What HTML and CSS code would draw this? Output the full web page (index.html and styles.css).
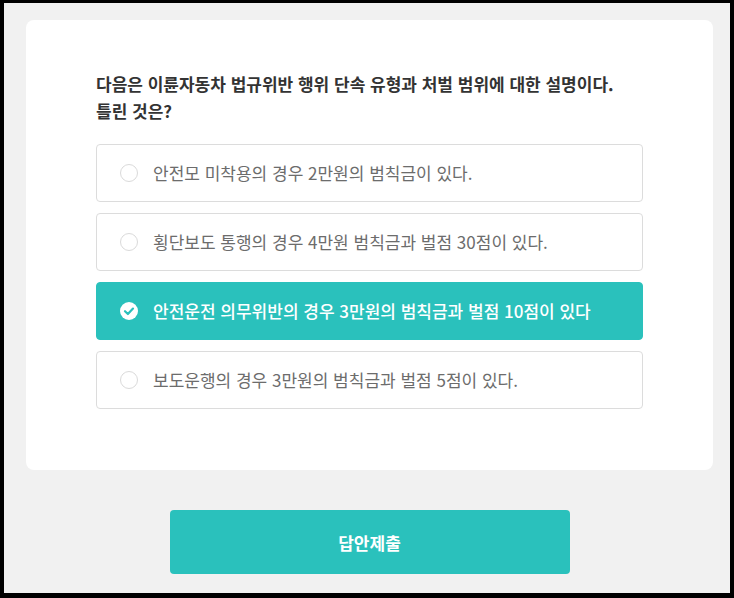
FILE: index.html
```html
<!DOCTYPE html>
<html lang="ko">
<head>
<meta charset="utf-8">
<link rel="stylesheet" href="styles.css">
</head>
<body>
<div class="frame">
  <section class="card">
    <h1 class="question">다음은 이륜자동차 법규위반 행위 단속 유형과 처벌 범위에 대한 설명이다.<br>틀린 것은?</h1>
    <ul class="options">
      <li class="option"><span class="radio"></span><span class="label">안전모 미착용의 경우 2만원의 범칙금이 있다.</span></li>
      <li class="option"><span class="radio"></span><span class="label">횡단보도 통행의 경우 4만원 범칙금과 벌점 30점이 있다.</span></li>
      <li class="option selected"><span class="radio checked"><svg viewBox="0 0 18 18" width="18" height="18"><circle cx="9" cy="9" r="9" fill="#fff"/><path d="M5 9.2 L7.9 12 L13 6.6" fill="none" stroke="#2ac1bc" stroke-width="2.2" stroke-linecap="round" stroke-linejoin="round"/></svg></span><span class="label">안전운전 의무위반의 경우 3만원의 범칙금과 벌점 10점이 있다</span></li>
      <li class="option"><span class="radio"></span><span class="label">보도운행의 경우 3만원의 범칙금과 벌점 5점이 있다.</span></li>
    </ul>
  </section>
  <div class="actions">
    <button class="submit">답안제출</button>
  </div>
</div>
</body>
</html>
```

FILE: styles.css
```css
* { box-sizing: border-box; }
html, body { margin: 0; padding: 0; }
body {
  background: #000;
  width: 734px;
  height: 598px;
  overflow: hidden;
  font-family: "Noto Sans CJK KR", "Noto Sans", sans-serif;
}
.frame {
  margin: 3px 4px 5px 4px;
  height: 590px;
  background: #f1f1f1;
  padding-top: 17px;
}
.card {
  margin: 0 17px 0 22px;
  height: 450px;
  background: #fff;
  border-radius: 8px;
  padding: 50px 70px 0 70px;
}
.question {
  margin: 0;
  font-size: 17px;
  font-weight: 700;
  line-height: 27px;
  color: #333;
  letter-spacing: 0;
}
.options {
  list-style: none;
  margin: 20px 0 0 0;
  padding: 0;
  display: flex;
  flex-direction: column;
  gap: 11px;
}
.option {
  height: 58px;
  border: 1px solid #dcdcdc;
  border-radius: 4px;
  display: flex;
  align-items: center;
  padding-left: 23px;
  color: #6c6c6c;
  font-size: 17px;
}
.radio {
  width: 18px;
  height: 18px;
  border: 1px solid #dadada;
  border-radius: 50%;
  flex: none;
  margin-right: 15px;
  display: flex;
}
.radio.checked { border: none; }
.option.selected {
  background: #2ac1bc;
  border-color: #2ac1bc;
  color: #fff;
  font-weight: 500;
}
.label { line-height: 24px; }
.actions {
  margin: 40px 17px 0 22px;
  display: flex;
  justify-content: center;
}
.submit {
  width: 400px;
  height: 64px;
  border: none;
  border-radius: 4px;
  background: #2ac1bc;
  color: #fff;
  font-family: "Noto Sans CJK KR", "Noto Sans", sans-serif;
  font-size: 17px;
  font-weight: 700;
  cursor: pointer;
}
```
